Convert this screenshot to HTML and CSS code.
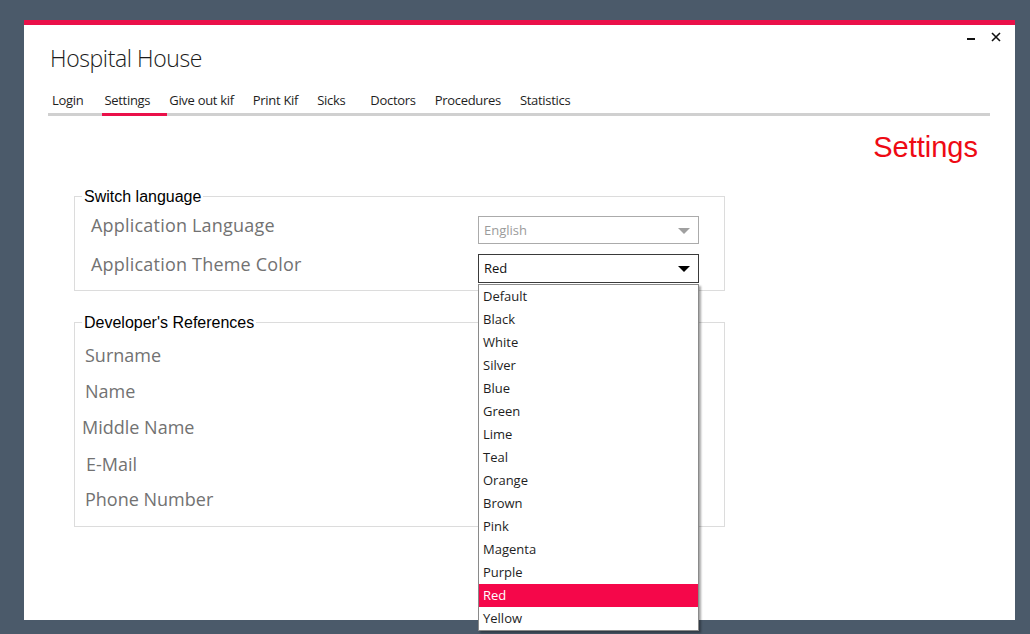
FILE: index.html
```html
<!DOCTYPE html>
<html>
<head>
<meta charset="utf-8">
<title>Hospital House</title>
<link rel="stylesheet" href="styles.css">
</head>
<body>
<div class="window">
  <div class="win-controls">
    <span class="win-min"></span>
    <svg class="win-close" width="10" height="10" viewBox="0 0 10 10"><path d="M1 1 L9 9 M9 1 L1 9" stroke="#111" stroke-width="1.6" fill="none"/></svg>
  </div>
  <h1 class="app-title">Hospital House</h1>
  <nav class="tabs">
    <span class="tab tab-first">Login</span>
    <span class="tab active">Settings</span>
    <span class="tab">Give out kif</span>
    <span class="tab">Print Kif</span>
    <span class="tab tab-wide">Sicks</span>
    <span class="tab">Doctors</span>
    <span class="tab">Procedures</span>
    <span class="tab">Statistics</span>
  </nav>
  <h2 class="page-title">Settings</h2>

  <fieldset class="group group-lang">
    <legend>Switch language</legend>
    <div class="row row-first">
      <span class="label">Application Language</span>
      <div class="combo combo-disabled"><span>English</span><i class="arrow"></i></div>
    </div>
    <div class="row">
      <span class="label">Application Theme Color</span>
      <div class="combo combo-open"><span>Red</span><i class="arrow"></i></div>
    </div>
  </fieldset>

  <fieldset class="group group-dev">
    <legend>Developer's References</legend>
    <div class="dev-label">Surname</div>
    <div class="dev-label">Name</div>
    <div class="dev-label shift-left">Middle Name</div>
    <div class="dev-label shift-right">E-Mail</div>
    <div class="dev-label">Phone Number</div>
  </fieldset>

  <ul class="dropdown">
    <li>Default</li>
    <li>Black</li>
    <li>White</li>
    <li>Silver</li>
    <li>Blue</li>
    <li>Green</li>
    <li>Lime</li>
    <li>Teal</li>
    <li>Orange</li>
    <li>Brown</li>
    <li>Pink</li>
    <li>Magenta</li>
    <li>Purple</li>
    <li class="selected">Red</li>
    <li>Yellow</li>
  </ul>
</div>
</body>
</html>
```

FILE: styles.css
```css
* { box-sizing: border-box; }

html, body {
  margin: 0;
  padding: 0;
  height: 100%;
}

body {
  background: #4b5a6a;
  font-family: "Open Sans", "Noto Sans", sans-serif;
  padding: 20px 0 0 24px;
}

.window {
  position: relative;
  width: 991px;
  height: 600px;
  background: #ffffff;
  border-top: 5px solid #ea1049;
}

.win-controls {
  position: absolute;
  top: 0;
  right: 0;
  width: 60px;
  height: 24px;
}

.win-min {
  position: absolute;
  left: 12px;
  top: 13px;
  width: 8px;
  height: 2px;
  background: #111;
}

.win-close {
  position: absolute;
  left: 36px;
  top: 7px;
}

.app-title {
  margin: 17px 0 0 26px;
  font-size: 23px;
  line-height: 32px;
  font-weight: 300;
  letter-spacing: -0.4px;
  color: #1b1b1b;
}

.tabs {
  display: flex;
  margin: 15px 0 0 24px;
  width: 942px;
  border-bottom: 3px solid #d0d0d0;
  padding-left: 2px;
}

.tab {
  font-size: 13px;
  letter-spacing: -0.3px;
  line-height: 20px;
  padding: 0.5px 17px 3.5px 2px;
  margin-bottom: -3px;
  border-bottom: 3px solid transparent;
  color: #1e1e1e;
}

.tab-first { padding-right: 19px; }

.tab-wide { padding-right: 23px; }

.tab.active { border-bottom-color: #ea1049; }

.page-title {
  margin: 14px 37px 0 0;
  text-align: right;
  font-family: "Liberation Sans", Arial, sans-serif;
  font-weight: normal;
  font-size: 29px;
  line-height: 34px;
  color: #ee0a14;
}

.group {
  margin: 0 0 0 50px;
  width: 651px;
  border: 1px solid #dcdcdc;
  padding: 0 0 0 7px;
  min-width: 0;
}

.group legend {
  font-family: "Liberation Sans", Arial, sans-serif;
  font-size: 16px;
  line-height: 18px;
  padding: 2px 2px 0;
  color: #000;
}

.group-lang {
  margin-top: 22px;
  padding-top: 10px;
  padding-bottom: 7px;
}

.row {
  display: flex;
  align-items: flex-start;
  padding-left: 9px;
}

.row + .row { margin-top: 10px; }

.label {
  width: 387px;
  font-size: 18px;
  line-height: 20px;
  letter-spacing: 0.2px;
  color: #727272;
}

.row-first .label { margin-top: -1px; }

.combo {
  position: relative;
  width: 221px;
  height: 28px;
  border: 1px solid #ababab;
  font-size: 13px;
  line-height: 26px;
  padding-left: 5px;
  color: #9b9b9b;
}

.combo-open {
  height: 29px;
  border-color: #3a3a3a;
  color: #111;
}

.arrow {
  position: absolute;
  right: 8px;
  top: 11px;
  width: 0;
  height: 0;
  border-left: 6px solid transparent;
  border-right: 6px solid transparent;
  border-top: 6px solid #a0a0a0;
}

.combo-open .arrow {
  top: 11px;
  border-top-color: #000;
}

.group-dev {
  margin-top: 21px;
  padding-top: 5px;
  padding-bottom: 9px;
}

.dev-label {
  font-size: 18px;
  line-height: 36px;
  color: #727272;
  padding-left: 3px;
}

.dev-label.shift-left { padding-left: 0; }
.dev-label.shift-right { padding-left: 4px; margin-top: 1px; margin-bottom: -1px; }

.dropdown {
  position: absolute;
  left: 454px;
  top: 259px;
  width: 221px;
  margin: 0;
  padding: 0;
  list-style: none;
  background: #fff;
  border: 1px solid #8a8a8a;
  box-shadow: 2px 2px 2px rgba(0, 0, 0, 0.35);
}

.dropdown li {
  height: 23px;
  line-height: 23px;
  padding-left: 4px;
  font-size: 13px;
  color: #1e1e1e;
}

.dropdown li.selected {
  background: #f5074a;
  color: #ffffff;
}
```
